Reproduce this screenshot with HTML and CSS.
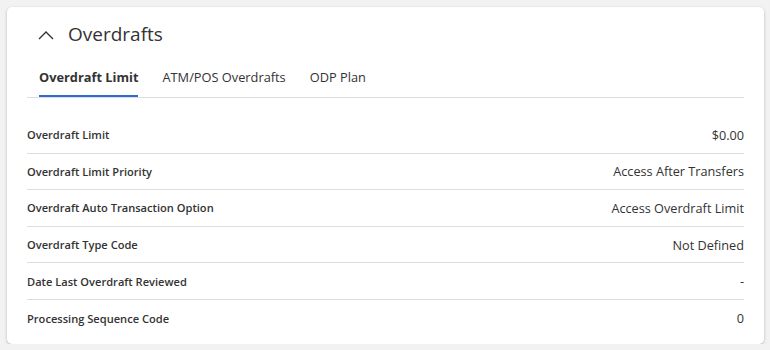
FILE: index.html
```html
<!DOCTYPE html>
<html>
	<head>
		<meta charset="UTF-8">
		<title>Overdrafts</title>
		<link rel="stylesheet" href="styles.css">
	</head>
	<body>
		<div class="card">
			<div class="card-head">
				<svg class="chevron" width="16" height="10" viewBox="0 0 16 10">
					<path d="M1 9 L8 2 L15 9" fill="none" stroke="#333" stroke-width="1.4"/>
				</svg>
				<h2>Overdrafts</h2>
			</div>
			<ul class="tabs">
				<li class="active">Overdraft Limit</li>
				<li>ATM/POS Overdrafts</li>
				<li>ODP Plan</li>
			</ul>
			<div class="rows">
				<div class="row"><span class="label">Overdraft Limit</span><span class="value">$0.00</span></div>
				<div class="row"><span class="label">Overdraft Limit Priority</span><span class="value">Access After Transfers</span></div>
				<div class="row"><span class="label">Overdraft Auto Transaction Option</span><span class="value">Access Overdraft Limit</span></div>
				<div class="row"><span class="label">Overdraft Type Code</span><span class="value">Not Defined</span></div>
				<div class="row"><span class="label">Date Last Overdraft Reviewed</span><span class="value">-</span></div>
				<div class="row"><span class="label">Processing Sequence Code</span><span class="value">0</span></div>
			</div>
		</div>
	</body>
</html>
```

FILE: styles.css
```css
*{
	margin: 0;
	padding: 0;
	box-sizing: border-box;
}
html, body{
	background: #f2f2f2;
}
body{
	padding: 7px 6px 0 7px;
	font-family: "Open Sans", "Liberation Sans", sans-serif;
	color: #333;
}
ul{
	list-style: none;
}
.card{
	background: #fff;
	border-radius: 5px;
	box-shadow: 0 1px 3px rgba(0,0,0,0.25);
	padding: 0 20px 8px 20px;
	height: 337px;
}
.card-head{
	display: flex;
	align-items: center;
	height: 53px;
	padding-left: 11px;
}
.chevron{
	margin-top: 2px;
	margin-right: 14px;
}
.card-head h2{
	font-size: 19px;
	font-weight: 400;
	color: #333;
}
.tabs{
	display: flex;
	gap: 24px;
	padding-left: 12px;
	margin-top: 8px;
	border-bottom: 1px solid #ddd;
}
.tabs li{
	font-size: 12.8px;
	line-height: 18px;
	padding-bottom: 9px;
	border-bottom: 2px solid transparent;
	cursor: pointer;
}
.tabs li.active{
	font-weight: 700;
	border-bottom-color: #2f6bd4;
}
.rows{
	margin-top: 19px;
}
.row{
	display: flex;
	justify-content: space-between;
	align-items: center;
	height: 36.6px;
	border-bottom: 1px solid #ddd;
}
.row:last-child{
	border-bottom: none;
}
.label{
	font-size: 11.1px;
	font-weight: 600;
}
.value{
	font-size: 12.7px;
}
```
